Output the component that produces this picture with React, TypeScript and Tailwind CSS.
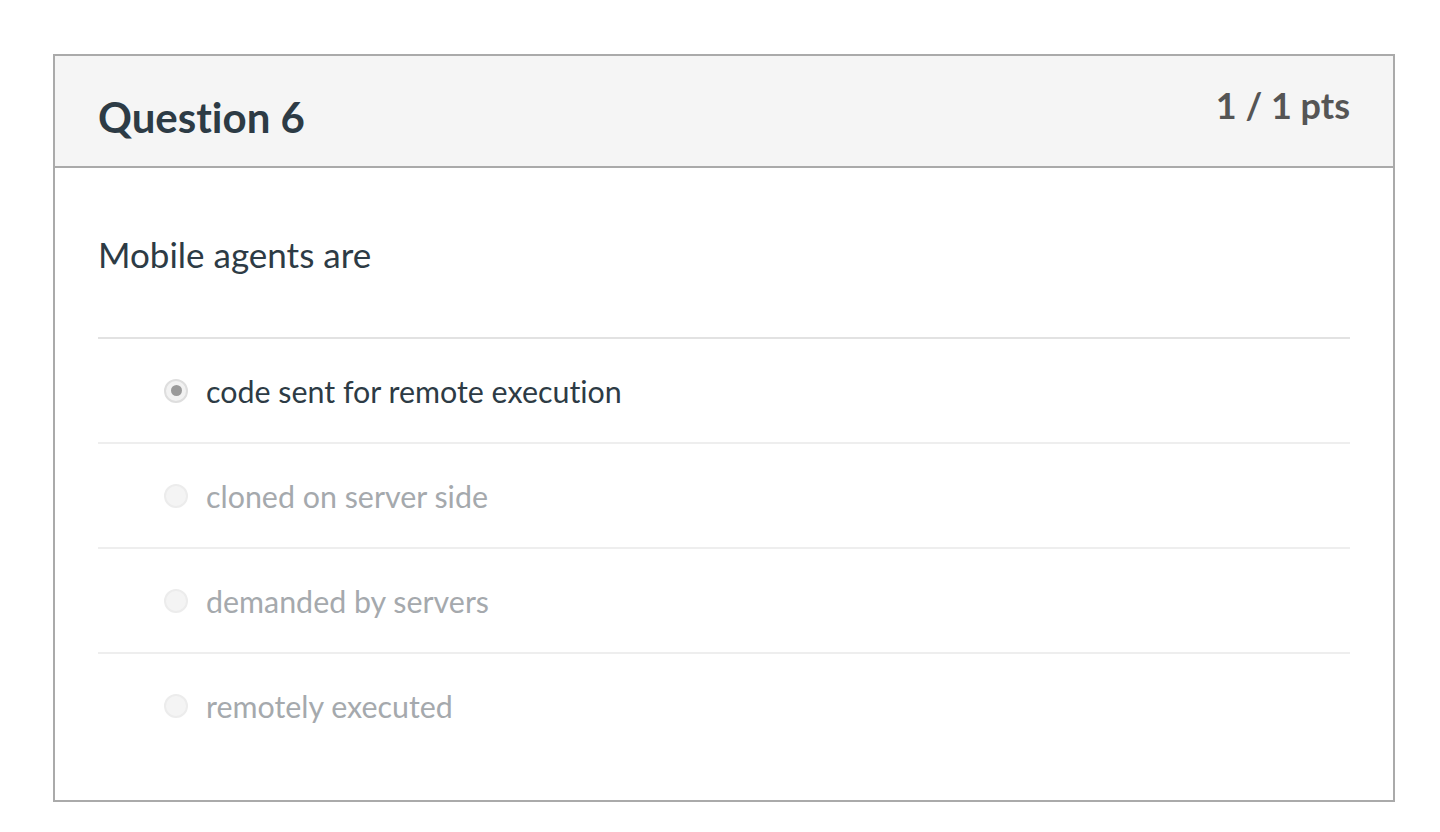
import React from "react";

const answers = [
  { text: "code sent for remote execution", selected: true },
  { text: "cloned on server side", selected: false },
  { text: "demanded by servers", selected: false },
  { text: "remotely executed", selected: false },
];

const Radio = ({ checked }: { checked: boolean }) => (
  <span
    className={
      checked
        ? "flex h-[24px] w-[24px] shrink-0 items-center justify-center rounded-full border-2 border-[#dedede] bg-[#f2f2f2]"
        : "flex h-[24px] w-[24px] shrink-0 items-center justify-center rounded-full border-2 border-[#ececec] bg-[#f4f4f4]"
    }
  >
    {checked && <span className="h-[11px] w-[11px] rounded-full bg-[#9a9a9a]" />}
  </span>
);

export default function App() {
  return (
    <div
      className="min-h-screen bg-white pl-[53px] pr-[45px] pt-[54px] [font-variant-ligatures:none]"
      style={{ fontFamily: "Lato, 'Open Sans', sans-serif" }}
    >
      <div className="border-2 border-[#aaaaaa]">
        <div className="flex h-[112px] items-start justify-between border-b-2 border-[#aaaaaa] bg-[#f5f5f5] px-[43px]">
          <h2 className="pt-[37px] text-[42px] font-bold leading-[48px] text-[#2d3b45]">
            Question 6
          </h2>
          <div className="pt-[28px] text-[36px] font-bold leading-[1.2] text-[#555555]">
            1 / 1 pts
          </div>
        </div>

        <div className="px-[43px] pb-[43px] pt-[62px]">
          <p className="mb-[59px] text-[35px] leading-[48px] text-[#2d3b45]">
            Mobile agents are
          </p>
          <div>
            {answers.map((a, i) => (
              <div
                key={a.text}
                className={
                  i === 0
                    ? "flex h-[105px] items-center gap-[18px] border-t-2 border-[#e2e2e2] pl-[66px]"
                    : "flex h-[105px] items-center gap-[18px] border-t-2 border-[#eeeeee] pl-[66px]"
                }
              >
                <Radio checked={a.selected} />
                <span
                  className={
                    a.selected
                      ? "text-[30.4px] leading-[40px] text-[#2d3b45]"
                      : "text-[30.4px] leading-[40px] text-[#a5a9ad]"
                  }
                >
                  {a.text}
                </span>
              </div>
            ))}
          </div>
        </div>
      </div>
    </div>
  );
}
